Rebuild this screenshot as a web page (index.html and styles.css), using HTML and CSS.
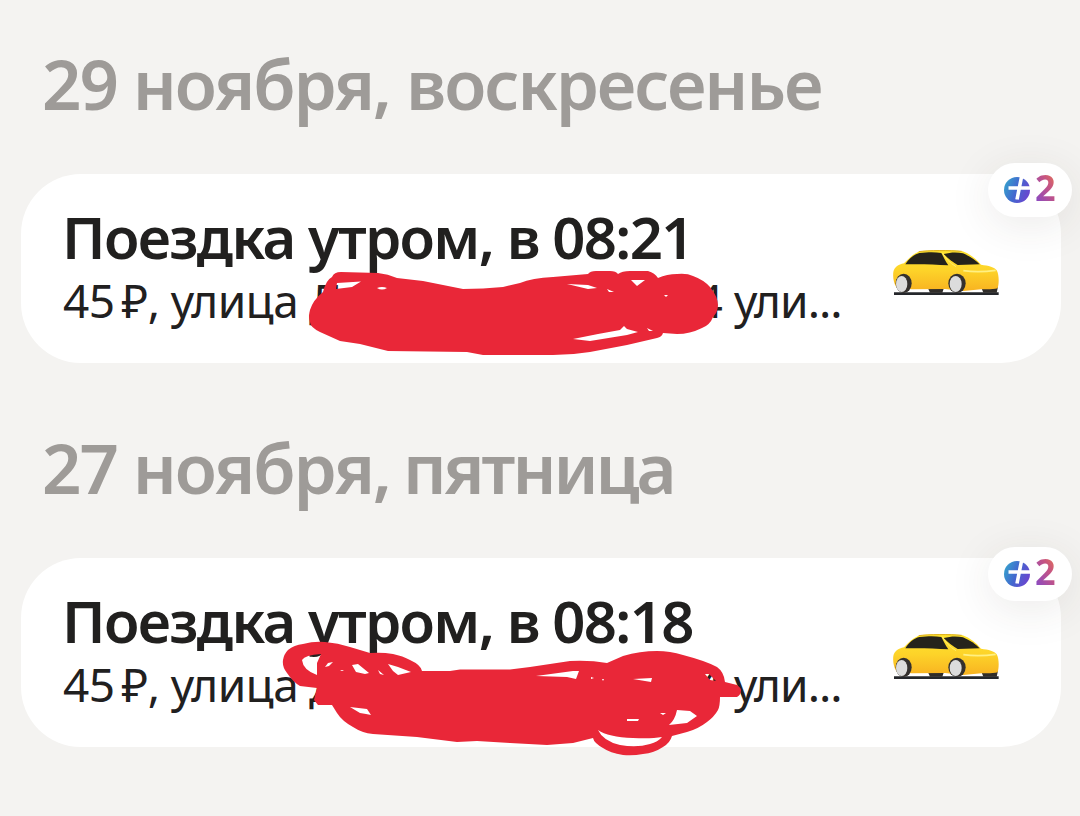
FILE: index.html
```
<!DOCTYPE html>
<html lang="ru">
<head>
  <meta charset="utf-8">
  <title>История поездок</title>
  <link rel="stylesheet" href="styles.css">
</head>
<body>
  <!-- Shared icons -->
  <svg width="0" height="0" class="defs">
    <defs>
      <linearGradient id="bodyPaint" x1="0" y1="0" x2="0" y2="1">
        <stop offset="0" stop-color="#ffe52e"/>
        <stop offset="0.5" stop-color="#fdd329"/>
        <stop offset="1" stop-color="#f8b321"/>
      </linearGradient>
      <linearGradient id="plusPaint" x1="0" y1="0.2" x2="1" y2="0.6">
        <stop offset="0" stop-color="#35a3cc"/>
        <stop offset="0.5" stop-color="#4368cf"/>
        <stop offset="1" stop-color="#6a45cf"/>
      </linearGradient>
      <symbol id="car" viewBox="39 27 321 141">
        <path d="M42 157H356V165H42Z" fill="#25272b"/>
        <path d="M142 140H193L187 158H150ZM303 140H354L350 158H310Z" fill="#302d2a"/>
        <path d="M40 96C43 82 54 74 72 70C86 55 99 42 114 36C140 29 210 28 248 34C270 42 288 56 303 74C326 77 344 81 350 91C358 105 357 132 353 145C340 149 320 148 304 148L250 153L195 147L95 148L50 143C41 130 38 112 40 96Z" fill="url(#bodyPaint)"/>
        <path d="M76 73C88 54 102 43 118 39C145 36 166 36 184 39C190 49 195 62 205 76C164 73 118 72 76 73Z" fill="#25231b"/>
        <path d="M191 42C212 36 233 36 249 40C270 49 287 60 299 73L233 75C219 67 204 56 191 42Z" fill="#25231b"/>
        <path d="M116 35C145 31 210 31 245 34" fill="none" stroke="#dcae21" stroke-width="3"/>
        <path d="M187 38C195 53 209 69 228 80" fill="none" stroke="#ffec69" stroke-width="3"/>
        <path d="M250 92C285 97 320 95 347 91" fill="none" stroke="#fff083" stroke-width="5"/>
        <ellipse cx="71" cy="130" rx="24" ry="29" fill="#34302d"/>
        <ellipse cx="231" cy="130" rx="26" ry="29" fill="#34302d"/>
        <ellipse cx="65" cy="132" rx="17" ry="24" fill="#dcdcdc"/>
        <ellipse cx="227" cy="132" rx="18" ry="24" fill="#dcdcdc"/>
      </symbol>
      <symbol id="plus" viewBox="0 0 26 26">
        <circle cx="13" cy="13" r="13" fill="url(#plusPaint)"/>
        <path d="M17.500 0L13 22.500M4.500 11H26" fill="none" stroke="#fff" stroke-width="3.600"/>
      </symbol>
    </defs>
  </svg>

  <section class="day">
    <h2>29 ноября, воскресенье</h2>
    <article class="card">
      <div class="info">
        <h3>Поездка утром, в 08:21</h3>
        <p><span class="price">45&#8201;₽, улица</span><span class="address"><span>Д</span><span>4</span></span><span class="rest">ули...</span></p>
      </div>
      <svg class="car"><use href="#car"/></svg>
      <div class="badge"><svg class="plus"><use href="#plus"/></svg><span>2</span></div>
      <svg class="scribble" viewBox="21 174 1040 189">
        <path d="M332 277Q334 272 341 272L378 273Q388 274 397 278L423 281L463 289Q483 289 503 287L520 283Q532 278 553 277L588 274Q590 271 596 271L610 271Q616 271 618 274Q622 271 630 271L648 271Q655 273 658 278Q667 274 677 274Q687 273 693 276Q704 280 710 287Q718 297 718 305Q718 312 713 317Q710 325 702 328Q690 334 677 334L663 333Q662 337 657 338L627 345L590 352Q572 355 553 355H483L467 352L388 351L360 344L340 341L320 332Q310 327 310 322Q308 317 310 310Q313 300 323 292Q326 280 332 277Z
          M337 283L361 281.500L352 287L336 289Z M377 288Q382 286 387 288Q382 291 377 288Z
          M567 284L588 285L597 288L588 289Z M607 289L614 292L609 292Z M631 280L645 280L637 286Z M664 295H668L666 297Z
          M573 339L598 334L620 330L624 326L627 329L638 332L627 335L590 341Z M647 328L653 331L649 331Z"/>
      </svg>
    </article>
  </section>

  <section class="day">
    <h2>27 ноября, <span class="short">пятница</span></h2>
    <article class="card">
      <div class="info">
        <h3>Поездка утром, в 08:18</h3>
        <p><span class="price">45&#8201;₽, улица</span><span class="address"><span>Д</span><span>4</span></span><span class="rest">ули...</span></p>
      </div>
      <svg class="car"><use href="#car"/></svg>
      <div class="badge"><svg class="plus"><use href="#plus"/></svg><span>2</span></div>
      <svg class="scribble" viewBox="21 558 1040 189">
        <path d="M283 660Q284 654 288 650Q294 645 303 644Q314 641 325 642Q338 643 350 647L370 653Q382 652 393 654Q403 656 410 660Q421 665 422 671L450 671L460 669.500H510L530 667L570 661Q590 660 607 663L623 656Q640 651 657 651Q670 651 683 655Q706 661 717 667Q724 672 725 682L737 685Q741 688 741 690Q741 695 737 697H720Q720 706 718 710Q714 717 707 722Q698 729 687 732L672 736Q670 743 663 747Q654 753 643 754Q633 756 623 755Q610 753 603 748Q594 743 593 738L573 743L547 745L510 743L477 741L457 742L417 737L373 734Q362 733 353 727Q342 721 337 713L332 705H318L314 700L317 688L300 686Q293 682 287 673Q282 667 283 660Z
          M302 660Q305 655 321 654L317 663L317 675Q303 670 302 660Z M325 667L328 663L333 662L329 666Z M340 671L342 670L344 671Z
          M352 665L358 664L369 673L365 674L356 672Z M378 670L384 675L380 674Z M388 664L398 667L411 672L398 675L393 671Z M350 707L367 709L371 715L366 714L360 713Z
          M536 676L573 671L579 671L576 679L567 677Z M591 677L594 678L591 679Z M602 679L604 679L603 681Z M633 679L652 678L651 682Z M705 674L709 674L716 681L710 680Z
          M677 710L690 711L697 716L687 723L669 725Q675 720 677 710Z M598 730Q608 737 633 738Q651 739 662 737Q658 742 650 744Q637 748 620 745Q603 741 598 730Z
          M627 719L639 719L638 721L627 721Z M660 713L666 713L663 715Z"/>
      </svg>
    </article>
  </section>
</body>
</html>
```
FILE: styles.css
```
body {
  margin: 0;
  width: 1080px;
  height: 816px;
  overflow: hidden;
  background-color: #f4f3f1;
  font-family: "Noto Sans", "Open Sans", sans-serif;
  color: #21201f;
}
.defs {
  display: block;
}
.day {
  padding: 0 19px 0 21px;
  height: 384px;
}
h2 {
  margin: 0;
  padding: 34px 0 0 21px;
  box-sizing: border-box;
  height: 174px;
  font-size: 69px;
  line-height: 98px;
  font-weight: 600;
  letter-spacing: -2.05px;
  color: #9e9b98;
  white-space: nowrap;
}
.short {
  margin-left: -3px;
  letter-spacing: -3px;
}
.card {
  position: relative;
  display: flex;
  align-items: center;
  height: 189px;
  border-radius: 60px;
  background-color: #fff;
}
.info {
  width: 872px;
  padding: 0 0 4px 43px;
  box-sizing: border-box;
}
h3 {
  margin: 0 0 0 -2px;
  font-size: 58px;
  line-height: 66px;
  font-weight: 600;
  letter-spacing: -1.65px;
  white-space: nowrap;
}
p {
  display: flex;
  margin: 0 0 0 -1px;
  font-size: 46px;
  line-height: 60px;
  letter-spacing: -0.7px;
  white-space: nowrap;
}
.price {
  width: 246px;
  letter-spacing: -0.6px;
}
.address {
  display: flex;
  justify-content: space-between;
  width: 413px;
}
.rest {
  margin-left: 12px;
  letter-spacing: -1px;
}
.car {
  width: 107px;
  height: 47px;
  margin-top: 8px;
}

/* Plus points badge */
.badge {
  position: absolute;
  top: -11px;
  right: -11px;
  display: flex;
  align-items: center;
  gap: 5px;
  width: 84px;
  height: 54px;
  padding-left: 16px;
  box-sizing: border-box;
  border-radius: 27px;
  background-color: #fff;
  box-shadow: 0 8px 44px rgba(60, 50, 40, 0.1);
}
.plus {
  width: 26px;
  height: 26px;
}
.badge span {
  margin-top: -4px;
  font-size: 36px;
  line-height: 50px;
  font-weight: 700;
  background: linear-gradient(60deg, #8f4bbd 20%, #c65482 60%, #e9784d 90%);
  -webkit-background-clip: text;
  background-clip: text;
  color: transparent;
}
.scribble {
  position: absolute;
  top: 0;
  left: 0;
  width: 1040px;
  height: 189px;
  overflow: visible;
  fill: #e92738;
  fill-rule: evenodd;
}
```
